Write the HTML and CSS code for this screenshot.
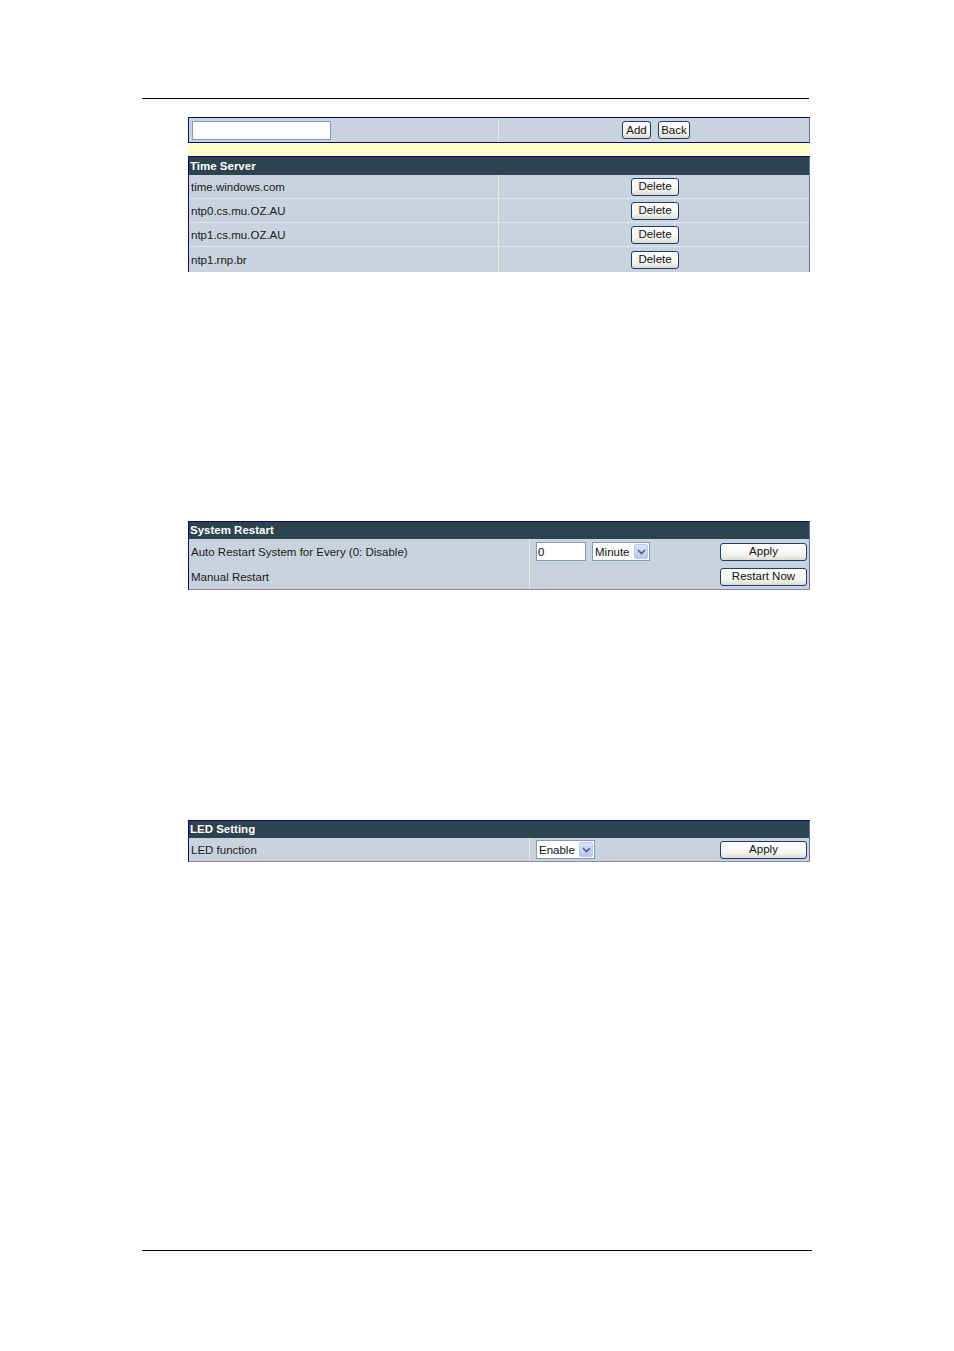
FILE: index.html
```html
<!DOCTYPE html>
<html>
<head>
<meta charset="utf-8">
<link rel="stylesheet" href="styles.css">
</head>
<body>
<div class="page">
  <div class="rule rule-top"></div>

  <div class="tbl tbl-add">
    <div class="row">
      <div class="cell c-left"><input class="txt txt-wide" type="text" value=""></div>
      <div class="cell c-right center">
        <button class="btn btn-add">Add</button>
        <button class="btn btn-back">Back</button>
      </div>
    </div>
  </div>
  <div class="strip"></div>

  <div class="tbl tbl-ts">
    <div class="hdr">Time Server</div>
    <div class="row sep">
      <div class="cell c-left">time.windows.com</div>
      <div class="cell c-right center"><button class="btn btn-del">Delete</button></div>
    </div>
    <div class="row sep">
      <div class="cell c-left">ntp0.cs.mu.OZ.AU</div>
      <div class="cell c-right center"><button class="btn btn-del">Delete</button></div>
    </div>
    <div class="row sep">
      <div class="cell c-left">ntp1.cs.mu.OZ.AU</div>
      <div class="cell c-right center"><button class="btn btn-del">Delete</button></div>
    </div>
    <div class="row last">
      <div class="cell c-left">ntp1.rnp.br</div>
      <div class="cell c-right center"><button class="btn btn-del">Delete</button></div>
    </div>
  </div>

  <div class="tbl tbl-sr">
    <div class="hdr">System Restart</div>
    <div class="row">
      <div class="cell c-left wide">Auto Restart System for Every (0: Disable)</div>
      <div class="cell c-right spread">
        <div class="inputs">
          <input class="txt txt-num" type="text" value="0">
          <div class="sel sel-min"><span class="sel-text">Minute</span><span class="sel-arrow"><svg width="9" height="6" viewBox="0 0 9 6"><path d="M1 1 L4.5 4.5 L8 1" fill="none" stroke="#4d6185" stroke-width="1.6"/></svg></span></div>
        </div>
        <button class="btn btn-wide">Apply</button>
      </div>
    </div>
    <div class="row">
      <div class="cell c-left wide">Manual Restart</div>
      <div class="cell c-right spread">
        <div class="inputs"></div>
        <button class="btn btn-wide">Restart Now</button>
      </div>
    </div>
  </div>

  <div class="tbl tbl-led">
    <div class="hdr">LED Setting</div>
    <div class="row">
      <div class="cell c-left wide">LED function</div>
      <div class="cell c-right spread">
        <div class="inputs">
          <div class="sel sel-en"><span class="sel-text">Enable</span><span class="sel-arrow"><svg width="9" height="6" viewBox="0 0 9 6"><path d="M1 1 L4.5 4.5 L8 1" fill="none" stroke="#4d6185" stroke-width="1.6"/></svg></span></div>
        </div>
        <button class="btn btn-wide">Apply</button>
      </div>
    </div>
  </div>

  <div class="rule rule-bottom"></div>
</div>
</body>
</html>
```

FILE: styles.css
```css
* { box-sizing: border-box; }
html, body { margin: 0; padding: 0; background: #ffffff; }
body {
  font-family: Tahoma, "Liberation Sans", "DejaVu Sans", sans-serif;
  font-size: 11.5px;
  color: #1a1a1a;
}
.page {
  width: 954px;
  height: 1351px;
  padding-top: 98px;
}
.rule {
  height: 1px;
  background: #000;
  margin-left: 142px;
}
.rule-top { width: 667px; }
.rule-bottom { width: 670px; margin-top: 388px; }

.tbl {
  margin-left: 188px;
  width: 622px;
  background: #c9d3de;
  border-left: 1px solid #0a0a6e;
  border-right: 1px solid #6b6ba4;
  border-top: 1px solid #0a0a6e;
}
.tbl-add {
  margin-top: 18px;
  border-bottom: 1px solid #0a0a6e;
}
.strip {
  margin-left: 188px;
  width: 622px;
  height: 13px;
  background: #fffdcc;
}
.tbl-ts { border-bottom: 0; }
.tbl-sr { margin-top: 249px; border-bottom: 1px solid #8d8aa8; }
.tbl-led { margin-top: 230px; border-bottom: 1px solid #8d8aa8; }

.hdr {
  height: 17px;
  background: #2d4350;
  color: #ffffff;
  font-weight: bold;
  padding-left: 1px;
  line-height: 17px;
  font-size: 11.5px;
}
.tbl-ts .hdr { height: 18px; line-height: 18px; }
.row {
  display: flex;
  height: 24px;
}
.row.last { height: 25px; }
.tbl-add .row { height: 24px; }
.tbl-sr .row { height: 25px; }
.tbl-led .row { height: 23px; }
.row.sep { border-bottom: 1px solid #e3e8ee; }

.cell {
  display: flex;
  align-items: center;
}
.c-left {
  width: 310px;
  padding-left: 2px;
  border-right: 1px solid #e6eaef;
}
.c-left.wide { width: 341px; }
.c-right { flex: 1; }
.center { justify-content: center; gap: 7px; padding-left: 4px; }
.spread {
  justify-content: space-between;
  padding-left: 6px;
  padding-right: 2px;
}
.inputs {
  display: flex;
  align-items: center;
  gap: 6px;
}

.txt {
  height: 19px;
  border: 1px solid #7f9db9;
  background: #ffffff;
  font-family: inherit;
  font-size: 11.5px;
  padding: 0 1px;
  margin: 0;
  color: #111;
}
.txt-wide { width: 139px; margin-left: 1px; }
.txt-num { width: 50px; }

.btn {
  height: 18px;
  border: 1px solid #1c3d6e;
  border-radius: 3px;
  background: linear-gradient(#ffffff, #f3f3ee 70%, #dcdad0);
  font-family: inherit;
  font-size: 11.5px;
  color: #111;
  padding: 0;
  margin: 0;
  line-height: 15px;
}
.btn-add { width: 29px; }
.btn-back { width: 32px; }
.btn-del { width: 48px; }
.tbl-ts .center { padding-left: 2px; }
.btn-wide { width: 87px; }

.sel {
  display: flex;
  align-items: center;
  justify-content: space-between;
  height: 19px;
  background: #ffffff;
  border: 1px solid #7f9db9;
  padding: 1px 1px 1px 2px;
}
.sel-min { width: 58px; }
.sel-en { width: 59px; }
.sel-text { font-size: 11.5px; color: #111; }
.sel-arrow {
  width: 14px;
  height: 15px;
  background: linear-gradient(#d8e3fb, #b5c8f3);
  border: 1px solid #b8c9ee;
  border-radius: 2px;
  display: flex;
  align-items: center;
  justify-content: center;
}
```
